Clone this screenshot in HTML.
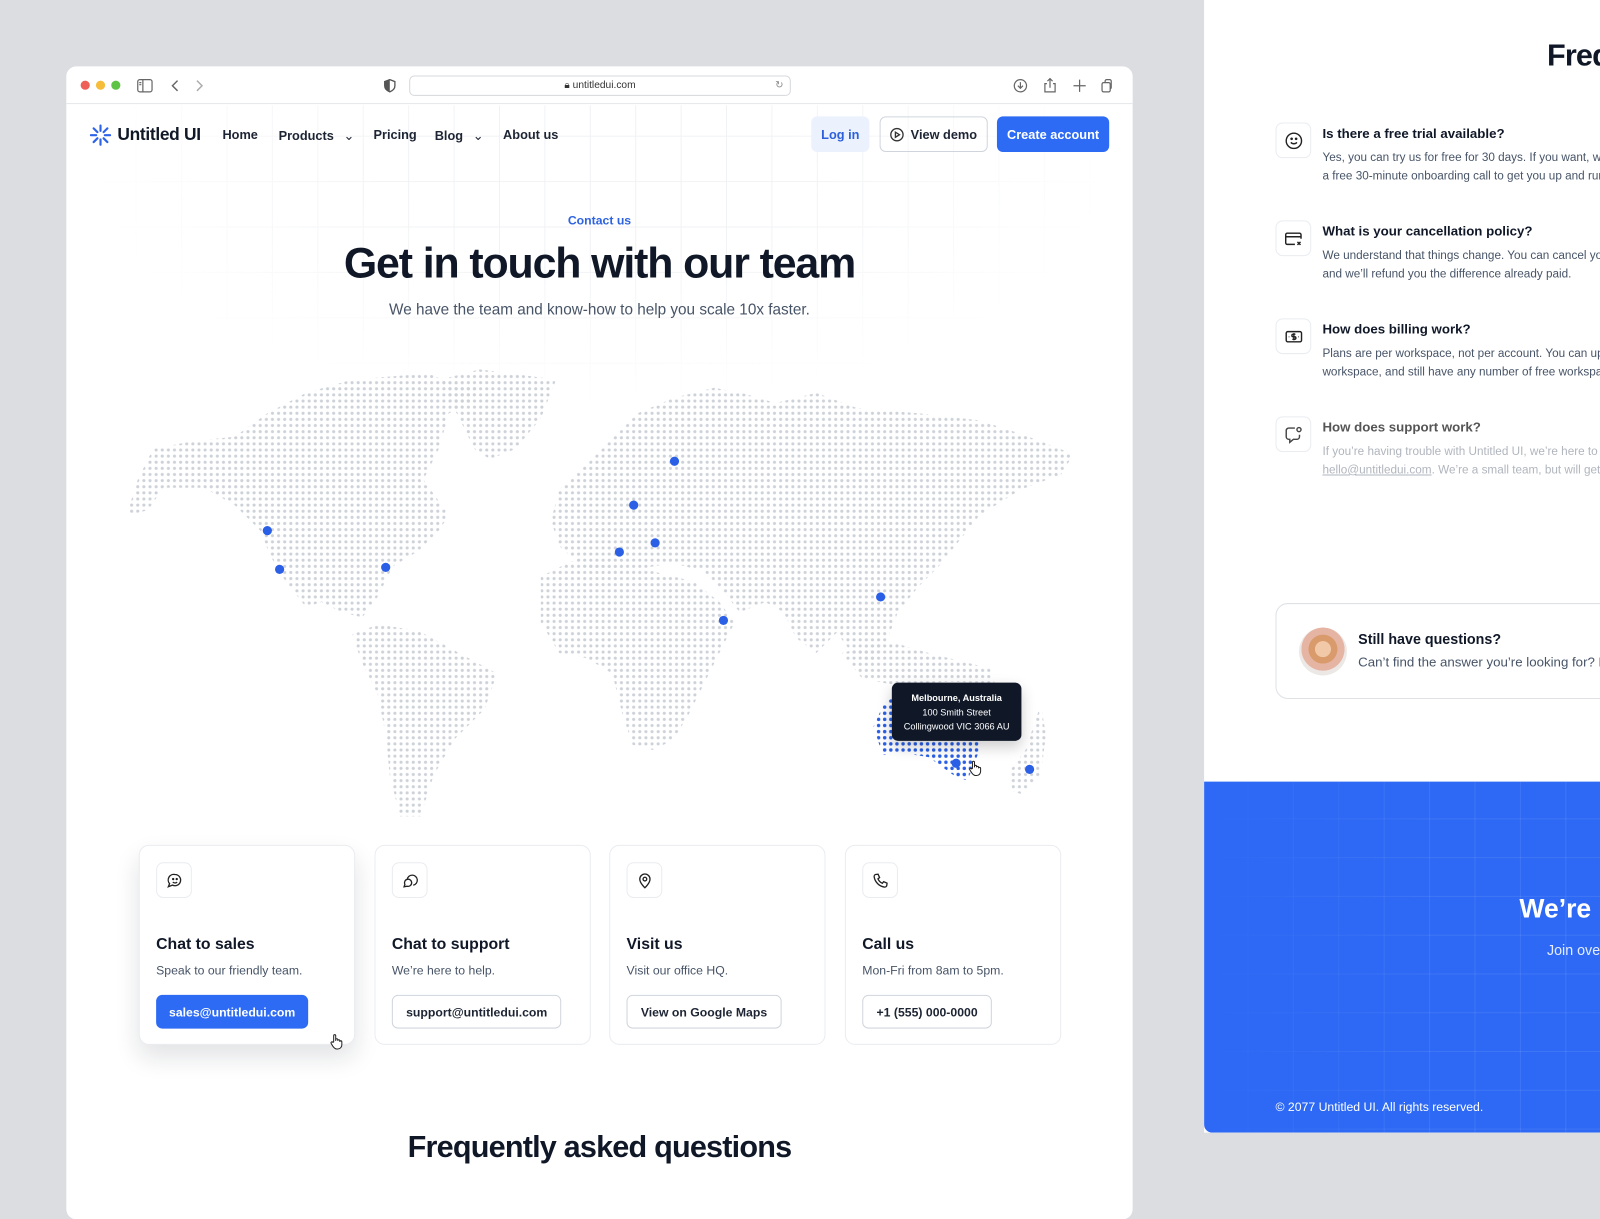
<!DOCTYPE html>
<html><head><meta charset="utf-8">
<style>
*{box-sizing:border-box;margin:0;padding:0}
html,body{width:1600px;height:1200px;overflow:hidden;background:#dcdde1;font-family:"Liberation Sans",Arial,sans-serif;color:#101828}
#s{position:absolute;left:0;top:0;width:1568px;height:1176px;transform:scale(1.020408);transform-origin:0 0}
.abs{position:absolute}
.win{left:65px;top:65px;width:1045px;height:1130px;background:#fff;border-radius:10px;overflow:hidden}
.tb{left:0;top:0;width:1045px;height:37px;border-bottom:1px solid #e7e8ea;background:#fff}
.grid{left:0;top:38px;width:1045px;height:320px;background-image:linear-gradient(90deg,#f1f2f4 1px,transparent 1px),linear-gradient(#f1f2f4 1px,transparent 1px);background-size:44.5px 44.5px;background-position:-21px 30px;-webkit-mask-image:radial-gradient(ellipse 60% 90% at 50% 20%,#000 30%,transparent 80%)}
.nav{font-size:12.5px;font-weight:bold;color:#1d2433;top:124px}
.btn{border-radius:6px;font-size:12.5px;font-weight:bold;display:flex;align-items:center;justify-content:center}
.card{width:212px;height:196px;top:763px;border:1px solid #eaecf0;border-radius:10px;background:#fff}
.ib{left:16px;top:16px;width:35px;height:35px;border:1px solid #eaecf0;border-radius:7px;display:flex;align-items:center;justify-content:center}
.ct{left:16px;top:88px;font-size:15.5px;font-weight:bold;color:#101828}
.cd{left:16px;top:115px;font-size:12px;color:#475467}
.cb{left:16px;top:146px;height:33px;padding:0 13px;border:1px solid #d0d5dd;border-radius:6px;font-size:12px;font-weight:bold;display:flex;align-items:center;color:#1d2433;white-space:nowrap}
.rp{left:1180px;top:0;width:388px;height:1110px;background:#fff;overflow:hidden}
.fi{left:70px;width:35px;height:35px;border:1px solid #eaecf0;border-radius:7px;display:flex;align-items:center;justify-content:center}
.ft{left:116px;font-size:13px;font-weight:bold;white-space:nowrap}
.fd{left:116px;font-size:11.5px;color:#475467;line-height:18px;white-space:nowrap}
</style></head><body><div id="s">

<div class="abs win">
 <div class="abs grid"></div>
 <div class="abs tb">
  <div class="abs" style="left:14px;top:14px;width:9px;height:9px;border-radius:50%;background:#ee5f57"></div>
  <div class="abs" style="left:29px;top:14px;width:9px;height:9px;border-radius:50%;background:#f5bd3a"></div>
  <div class="abs" style="left:44px;top:14px;width:9px;height:9px;border-radius:50%;background:#5fc346"></div>
  <svg class="abs" style="left:69px;top:12px" width="16" height="14" viewBox="0 0 16 14" fill="none" stroke="#666" stroke-width="1.2"><rect x="1" y="1" width="14" height="12" rx="2"/><path d="M6 1v12M2.5 4h2M2.5 6h2"/></svg>
  <svg class="abs" style="left:102px;top:12px" width="40" height="14" fill="none" stroke="#666" stroke-width="1.4"><path d="M7 2L2 7l5 5"/><path d="M26 2l5 5-5 5" stroke="#aaa"/></svg>
  <svg class="abs" style="left:311px;top:12px" width="12" height="14"><path d="M6 1L1 3v4c0 3 2.5 5 5 6 2.5-1 5-3 5-6V3z" fill="none" stroke="#555" stroke-width="1.3"/><path d="M6 1v12c-2.5-1-5-3-5-6V3z" fill="#555"/></svg>
  <div class="abs" style="left:336px;top:9px;width:374px;height:20px;border:1px solid #d6d8dc;border-radius:5px;font-size:10px;color:#333;text-align:center;line-height:18px">&#128274;&#xFE0E; untitledui.com<span style="position:absolute;right:6px;color:#888">&#8635;</span></div>
  <svg class="abs" style="left:928px;top:11px" width="100" height="16" fill="none" stroke="#666" stroke-width="1.2"><circle cx="7" cy="8" r="6"/><path d="M7 4.5v6M4.5 8l2.5 2.5L9.5 8"/><path d="M33 6h-2v8h10V6h-2M36 10V1M33.5 3.5L36 1l2.5 2.5"/><path d="M65 2v12M59 8h12"/><rect x="87" y="5" width="8" height="9" rx="1.5"/><path d="M90 5V3.5A1.5 1.5 0 0 1 91.5 2h3A1.5 1.5 0 0 1 96 3.5v6A1.5 1.5 0 0 1 95 11"/></svg>
 </div>
 <svg class="abs" style="left:23px;top:57px" width="21" height="21" viewBox="0 0 20 20" stroke="#2d63e8" stroke-width="2" stroke-linecap="round"><path d="M10 1v5M10 14v5M1 10h5M14 10h5M3.6 3.6l3.5 3.5M12.9 12.9l3.5 3.5M3.6 16.4l3.5-3.5M12.9 7.1l3.5-3.5"/></svg>
 <div class="abs" style="left:50px;top:57px;font-size:17px;font-weight:bold;letter-spacing:-0.3px">Untitled UI</div>
 <div class="abs nav" style="left:153px;top:60px">Home</div>
 <div class="abs nav" style="left:208px;top:60px">Products <span style="font-weight:normal;margin-left:6px">&#8964;</span></div>
 <div class="abs nav" style="left:301px;top:60px">Pricing</div>
 <div class="abs nav" style="left:361px;top:60px">Blog <span style="font-weight:normal;margin-left:6px">&#8964;</span></div>
 <div class="abs nav" style="left:428px;top:60px">About us</div>
 <div class="abs btn" style="left:730px;top:49px;width:57px;height:35px;background:#ebf1fd;color:#2d5fdc">Log in</div>
 <div class="abs btn" style="left:797px;top:49px;width:106px;height:35px;border:1px solid #d0d5dd;color:#1d2433"><svg width="14" height="14" style="margin-right:6px" fill="none" stroke="#333" stroke-width="1.3"><circle cx="7" cy="7" r="6"/><path d="M5.5 4.5v5l4-2.5z"/></svg>View demo</div>
 <div class="abs btn" style="left:912px;top:49px;width:110px;height:35px;background:#2d6bf4;color:#fff">Create account</div>

 <div class="abs" style="left:0;width:1045px;top:144px;text-align:center;font-size:12px;font-weight:bold;color:#2d63e0">Contact us</div>
 <div class="abs" style="left:0;width:1045px;top:169px;text-align:center;font-size:42px;font-weight:bold;letter-spacing:-1.1px;color:#101828">Get in touch with our team</div>
 <div class="abs" style="left:0;width:1045px;top:230px;text-align:center;font-size:15px;color:#475467">We have the team and know-how to help you scale 10x faster.</div>

 <svg class="abs" style="left:-65px;top:-65px" width="1110" height="1000" viewBox="0 0 1110 1000">
  <defs>
   <pattern id="d" width="6" height="6" patternUnits="userSpaceOnUse"><circle cx="3" cy="3" r="1.5" fill="#cdd1d8"/></pattern>
   <pattern id="b" width="6" height="6" patternUnits="userSpaceOnUse"><circle cx="3" cy="3" r="1.7" fill="#2a5fe6"/></pattern>
  </defs>
  <g fill="url(#d)">
   <path d="M124 505L135 470L150 440L190 432L230 428L262 405L300 385L345 372L420 366L440 375L470 378L460 395L440 405L430 440L415 470L440 505L430 520L410 540L385 555L370 585L355 605L335 600L315 590L300 595L280 570L265 545L255 520L230 495L200 478L160 478L145 500Z"/>
   <path d="M432 372L470 362L545 372L530 410L505 440L480 450L465 440L450 410L440 390Z"/>
   <path d="M345 622L370 612L410 618L450 640L487 660L475 695L445 725L425 760L412 800L392 800L382 760L378 720L370 680L355 650Z"/>
   <path d="M548 480L575 455L600 430L625 405L660 390L700 380L730 386L760 395L800 385L840 400L900 405L960 412L1000 425L1052 445L1040 465L1000 480L960 505L940 530L920 555L900 575L880 600L870 625L855 650L835 640L820 620L800 640L780 625L768 600L750 590L725 600L705 575L690 560L660 552L640 555L620 560L600 560L570 555L548 535L540 510Z"/>
   <path d="M530 565L560 550L600 555L640 560L680 570L705 590L720 610L705 640L690 670L675 700L660 725L640 735L620 730L610 700L600 660L575 645L548 640L530 610Z"/>
   <path d="M825 640L870 628L910 640L970 655L975 670L930 668L880 672L845 665Z"/>
   <path d="M990 755L1005 735L1020 690L1025 720L1020 760L1000 778L992 775Z"/>
  </g>
  <path fill="url(#b)" d="M856 712L866 690L880 680L905 672L935 670L958 685L965 710L960 735L948 765L935 760L910 742L885 738L865 740Z"/>
  <g fill="#2a5fe6">
   <circle cx="262" cy="520" r="4.5"/><circle cx="274" cy="558" r="4.5"/><circle cx="378" cy="556" r="4.5"/><circle cx="661" cy="452" r="4.5"/><circle cx="621" cy="495" r="4.5"/><circle cx="607" cy="541" r="4.5"/><circle cx="642" cy="532" r="4.5"/><circle cx="709" cy="608" r="4.5"/><circle cx="863" cy="585" r="4.5"/><circle cx="937" cy="748" r="4.5"/><circle cx="1009" cy="754" r="4.5"/>
  </g>
 </svg>
 <div class="abs" style="left:809px;top:604px;width:127px;height:57px;background:#101828;border-radius:6px;color:#fff;text-align:center;font-size:9px;line-height:14px;padding-top:8px;box-shadow:0 6px 14px rgba(0,0,0,.2)"><b>Melbourne, Australia</b><br>100 Smith Street<br>Collingwood VIC 3066 AU</div>

 <div class="abs card" style="left:71px;box-shadow:0 12px 24px rgba(16,24,40,.12)">
  <div class="abs ib"><svg width="16" height="16" viewBox="0 0 16 16" fill="none" stroke="#222" stroke-width="1.3"><path d="M8.5 2a5.5 5.5 0 1 1-2.5 10.4L2 14l1.2-3A5.5 5.5 0 0 1 8.5 2z"/><path d="M6.3 9.5c1.3 1 3.1 1 4.3 0"/><circle cx="6.7" cy="6.5" r=".5" fill="#222"/><circle cx="10.2" cy="6.5" r=".5" fill="#222"/></svg></div>
  <div class="abs ct">Chat to sales</div><div class="abs cd">Speak to our friendly team.</div>
  <div class="abs cb" style="background:#2d6bf4;border-color:#2d6bf4;color:#fff;width:149px;justify-content:center">sales@untitledui.com</div>
 </div>
 <div class="abs card" style="left:302px">
  <div class="abs ib"><svg width="16" height="16" viewBox="0 0 16 16" fill="none" stroke="#222" stroke-width="1.3"><path d="M5 7a5 5 0 1 1 6 5.5"/><path d="M2 14l.8-2.3A3.5 3.5 0 1 1 5 13.5z"/></svg></div>
  <div class="abs ct">Chat to support</div><div class="abs cd">We’re here to help.</div>
  <div class="abs cb">support@untitledui.com</div>
 </div>
 <div class="abs card" style="left:532px">
  <div class="abs ib"><svg width="16" height="16" viewBox="0 0 16 16" fill="none" stroke="#222" stroke-width="1.3"><path d="M8 15s5-4.5 5-8.5a5 5 0 0 0-10 0C3 10.5 8 15 8 15z"/><circle cx="8" cy="6.5" r="1.8"/></svg></div>
  <div class="abs ct">Visit us</div><div class="abs cd">Visit our office HQ.</div>
  <div class="abs cb">View on Google Maps</div>
 </div>
 <div class="abs card" style="left:763px">
  <div class="abs ib"><svg width="16" height="16" viewBox="0 0 16 16" fill="none" stroke="#222" stroke-width="1.3"><path d="M3 2l2.5-.3 1.5 3.3-1.6 1.3a8 8 0 0 0 4.3 4.3L11 9l3.3 1.5L14 13c-.3 1-1.5 1.5-2.5 1.3A12 12 0 0 1 1.7 4.5C1.5 3.5 2 2.3 3 2z"/></svg></div>
  <div class="abs ct">Call us</div><div class="abs cd">Mon-Fri from 8am to 5pm.</div>
  <div class="abs cb">+1 (555) 000-0000</div>
 </div>
 <svg class="abs" style="left:258px;top:948px" width="14" height="16" viewBox="0 0 14 16" fill="#fff" stroke="#222" stroke-width="1"><path d="M4 8V2a1 1 0 0 1 2 0v5V6a1 1 0 0 1 2 0v1a1 1 0 0 1 2 0v1a1 1 0 0 1 2 0v3c0 2-1.5 4-4 4H7c-2 0-3-1.5-4-3L1.5 9.5a1 1 0 0 1 1.8-1z"/></svg>
 <svg class="abs" style="left:884px;top:680px" width="14" height="16" viewBox="0 0 14 16" fill="#fff" stroke="#222" stroke-width="1"><path d="M4 8V2a1 1 0 0 1 2 0v5V6a1 1 0 0 1 2 0v1a1 1 0 0 1 2 0v1a1 1 0 0 1 2 0v3c0 2-1.5 4-4 4H7c-2 0-3-1.5-4-3L1.5 9.5a1 1 0 0 1 1.8-1z"/></svg>

 <div class="abs" style="left:0;width:1045px;top:1043px;text-align:center;font-size:30px;font-weight:bold;letter-spacing:-0.8px">Frequently asked questions</div>
</div>

<div class="abs rp">
 <div class="abs" style="left:336px;top:38px;font-size:30px;font-weight:bold;letter-spacing:-0.8px;white-space:nowrap">Frequently asked questions</div>
 <div class="abs fi" style="top:120px"><svg width="18" height="18" viewBox="0 0 18 18" fill="none" stroke="#222" stroke-width="1.4"><circle cx="9" cy="9" r="7.5"/><path d="M6 10.5c1.6 1.8 4.4 1.8 6 0"/><circle cx="6.8" cy="7" r=".6" fill="#222"/><circle cx="11.2" cy="7" r=".6" fill="#222"/></svg></div>
 <div class="abs ft" style="top:123px">Is there a free trial available?</div>
 <div class="abs fd" style="top:146px">Yes, you can try us for free for 30 days. If you want, we’ll provide you with<br>a free 30-minute onboarding call to get you up and running.</div>
 <div class="abs fi" style="top:216px"><svg width="18" height="18" viewBox="0 0 18 18" fill="none" stroke="#222" stroke-width="1.4"><path d="M16 9V5a1.5 1.5 0 0 0-1.5-1.5h-12A1.5 1.5 0 0 0 1 5v8a1.5 1.5 0 0 0 1.5 1.5H10M1 7h15M12.5 12l3 3M15.5 12l-3 3"/></svg></div>
 <div class="abs ft" style="top:219px">What is your cancellation policy?</div>
 <div class="abs fd" style="top:242px">We understand that things change. You can cancel your plan at any time<br>and we’ll refund you the difference already paid.</div>
 <div class="abs fi" style="top:312px"><svg width="18" height="18" viewBox="0 0 18 18" fill="none" stroke="#222" stroke-width="1.4"><rect x="1.5" y="4" width="15" height="10" rx="1.5"/><path d="M10.5 6.5H8.3a1.2 1.2 0 0 0 0 2.5h1.4a1.2 1.2 0 0 1 0 2.5H7.5M9 5.5v7M4 9h.5M13.5 9h.5"/></svg></div>
 <div class="abs ft" style="top:315px">How does billing work?</div>
 <div class="abs fd" style="top:338px">Plans are per workspace, not per account. You can upgrade one<br>workspace, and still have any number of free workspaces.</div>
 <div class="abs fi" style="top:408px"><svg width="18" height="18" viewBox="0 0 18 18" fill="none" stroke="#444" stroke-width="1.4"><path d="M10 2.5H4A2.5 2.5 0 0 0 1.5 5v6A2.5 2.5 0 0 0 4 13.5h1v3l3.5-3H12a2.5 2.5 0 0 0 2.5-2.5V9"/><circle cx="14" cy="4" r="2"/></svg></div>
 <div class="abs ft" style="top:411px;color:#555">How does support work?</div>
 <div class="abs fd" style="top:434px;color:#b0b5bd">If you’re having trouble with Untitled UI, we’re here to try and help via<br><u>hello@untitledui.com</u>. We’re a small team, but will get back to you soon.</div>

 <div class="abs" style="left:70px;top:591px;width:360px;height:94px;border:1px solid #dfe1e5;border-radius:12px;background:#fff">
  <div class="abs" style="left:22px;top:23px;width:47px;height:47px;border-radius:50%;background:radial-gradient(circle at 50% 45%,#f1c9a8 0 22%,#d99a6c 23% 40%,#e6b4a3 41% 60%,#ece8e6 61%)"></div>
  <div class="abs" style="left:80px;top:26px;font-size:14px;font-weight:bold">Still have questions?</div>
  <div class="abs" style="left:80px;top:49px;font-size:13px;color:#475467;white-space:nowrap">Can’t find the answer you’re looking for? Please chat to our friendly team.</div>
 </div>

 <div class="abs" style="left:0;top:766px;width:388px;height:344px;background:#2d69f5;border-radius:0 0 0 8px;overflow:hidden">
  <div class="abs" style="left:0;top:0;width:388px;height:344px;background-image:linear-gradient(90deg,rgba(255,255,255,.09) 1px,transparent 1px),linear-gradient(rgba(255,255,255,.09) 1px,transparent 1px);background-size:44.5px 38px;background-position:-2px 36px;-webkit-mask-image:linear-gradient(90deg,transparent,#000 60%)"></div>
  <div class="abs" style="left:309px;top:109px;font-size:26px;font-weight:bold;color:#fff;white-space:nowrap">We’re ready</div>
  <div class="abs" style="left:336px;top:157px;font-size:14px;color:#e6edff;white-space:nowrap">Join over 4,000+ startups</div>
  <div class="abs" style="left:70px;top:312px;font-size:12px;color:#fff">© 2077 Untitled UI. All rights reserved.</div>
 </div>
</div>
</div></body></html>
